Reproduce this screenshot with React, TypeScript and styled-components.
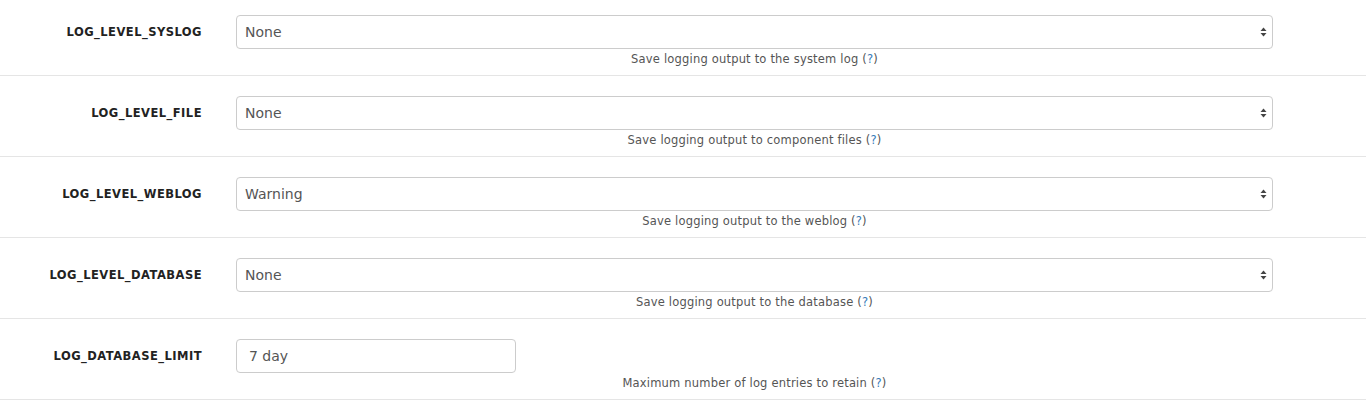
import React from "react";
import styled, { createGlobalStyle } from "styled-components";

const Global = createGlobalStyle`
  html, body { margin: 0; padding: 0; background: #fff; }
  body { font-family: "DejaVu Sans", Verdana, sans-serif; color: #333; }
`;

const List = styled.div`
  display: flex;
  flex-direction: column;
  width: 1366px;
`;

const Row = styled.div<{ $first?: boolean }>`
  display: grid;
  grid-template-columns: 202px 1037px;
  column-gap: 34px;
  padding: ${(p) => (p.$first ? "15px" : "20px")} 0 8px;
  border-bottom: 1px solid #e5e5e5;
`;

const Label = styled.div`
  text-align: right;
  font-weight: bold;
  font-size: 11.5px;
  letter-spacing: 0.47px;
  line-height: 16px;
  padding-top: 9px;
  color: #222;
  white-space: nowrap;
`;

const Control = styled.div`
  display: flex;
  flex-direction: column;
`;

const SelectWrap = styled.div`
  position: relative;
  height: 34px;
`;

const Select = styled.select`
  appearance: none;
  -webkit-appearance: none;
  width: 100%;
  height: 34px;
  box-sizing: border-box;
  border: 1px solid #cccccc;
  border-radius: 4px;
  background: #fff;
  padding: 0 8px;
  font-family: "DejaVu Sans", Verdana, sans-serif;
  font-size: 14px;
  color: #555;
  outline: none;
`;

const Arrows = styled.svg`
  position: absolute;
  right: 6px;
  top: 12px;
  pointer-events: none;
`;

const Input = styled.input`
  width: 280px;
  height: 34px;
  box-sizing: border-box;
  border: 1px solid #cccccc;
  border-radius: 4px;
  padding: 0 12px;
  font-family: "DejaVu Sans", Verdana, sans-serif;
  font-size: 14px;
  color: #555;
  outline: none;
`;

const Help = styled.div`
  margin-top: 2px;
  font-size: 11.5px;
  letter-spacing: 0.19px;
  line-height: 16px;
  color: #555;
  text-align: center;
`;

const HelpLink = styled.a`
  color: #337ab7;
  text-decoration: none;
`;

type Item = {
  name: string;
  value: string;
  help: string;
  kind: "select" | "input";
};

const items: Item[] = [
  { name: "LOG_LEVEL_SYSLOG", value: "None", help: "Save logging output to the system log", kind: "select" },
  { name: "LOG_LEVEL_FILE", value: "None", help: "Save logging output to component files", kind: "select" },
  { name: "LOG_LEVEL_WEBLOG", value: "Warning", help: "Save logging output to the weblog", kind: "select" },
  { name: "LOG_LEVEL_DATABASE", value: "None", help: "Save logging output to the database", kind: "select" },
  { name: "LOG_DATABASE_LIMIT", value: "7 day", help: "Maximum number of log entries to retain", kind: "input" },
];

const options = ["None", "Error", "Warning", "Info", "Debug"];

export default function App() {
  return (
    <>
      <Global />
      <List>
        {items.map((it, i) => (
          <Row key={it.name} $first={i === 0}>
            <Label>{it.name}</Label>
            <Control>
              {it.kind === "select" ? (
                <SelectWrap>
                  <Select defaultValue={it.value}>
                    {options.map((o) => (
                      <option key={o}>{o}</option>
                    ))}
                  </Select>
                  <Arrows width="7" height="10" viewBox="0 0 7 10">
                    <path d="M3.5 0.5 L6.5 4 L0.5 4 Z" fill="#444" />
                    <path d="M3.5 9.5 L6.5 6 L0.5 6 Z" fill="#444" />
                  </Arrows>
                </SelectWrap>
              ) : (
                <Input defaultValue={it.value} />
              )}
              <Help>
                {it.help} (<HelpLink href="#">?</HelpLink>)
              </Help>
            </Control>
          </Row>
        ))}
      </List>
    </>
  );
}
